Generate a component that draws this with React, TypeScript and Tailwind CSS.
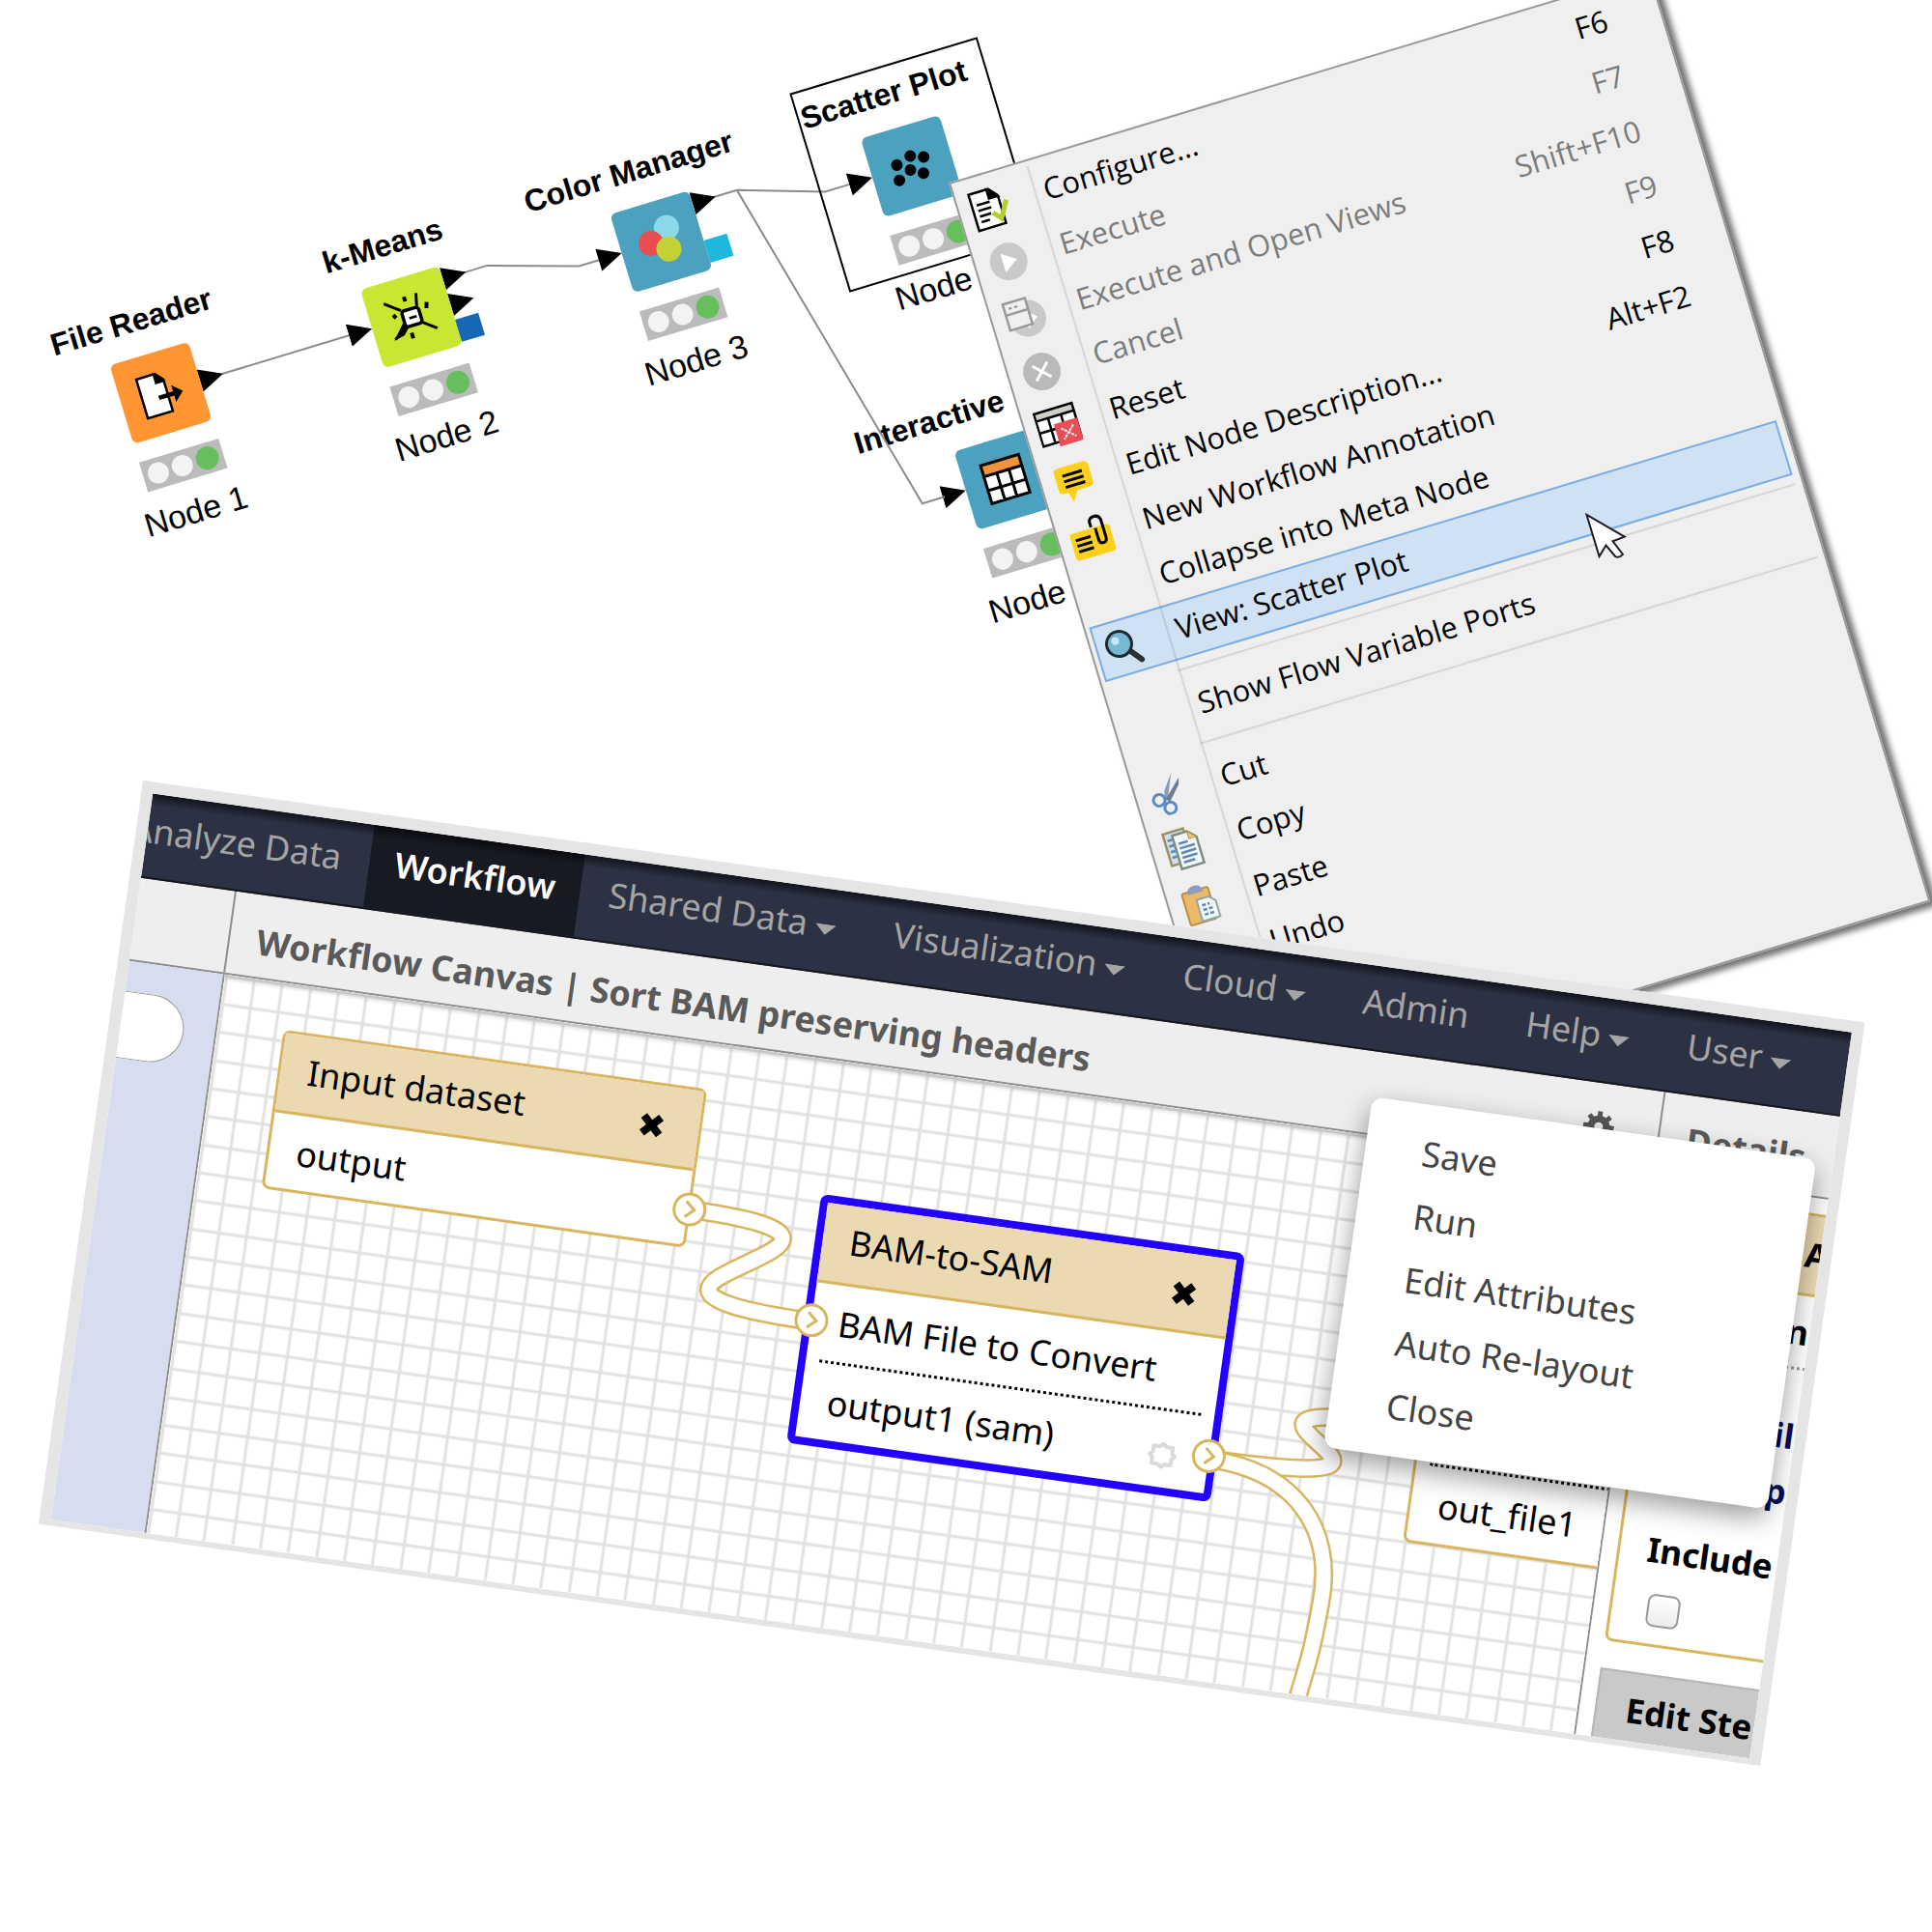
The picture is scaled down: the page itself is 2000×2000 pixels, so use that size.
import React from "react";

type Port = { side: "in" | "out"; at: string; kind?: string };

function StatusLights() {
  return (
    <div className="flex h-8 w-[86px] items-center justify-center gap-1 bg-[#bbbbbb]">
      <span className="h-[22px] w-[22px] rounded-full bg-[#f3f3f3]" />
      <span className="h-[22px] w-[22px] rounded-full bg-[#f3f3f3]" />
      <span className="h-6 w-6 rounded-full bg-[#66bf5c]" />
    </div>
  );
}

function FileReaderIcon() {
  return (
    <svg viewBox="0 0 85 85" className="h-full w-full">
      <path d="M22 22h20l7 8v34H22z" fill="#fff" stroke="#000" strokeWidth="2.5" />
      <path d="M40 21v11h10z" fill="#000" stroke="#000" strokeWidth="1" />
      <path d="M39 47h18" stroke="#000" strokeWidth="4.5" />
      <path d="M55 38l10 9-10 9z" fill="#000" />
    </svg>
  );
}

function ClusterIcon() {
  return (
    <svg viewBox="0 0 85 85" className="h-full w-full">
      <g stroke="#000" strokeWidth="3" fill="none">
        <path d="M19 21l15 12M54 20l-3 13M65 61L52 51M20 60l13-8" />
        <path d="M20 60l10-2 8-8-6-3z" fill="#000" strokeWidth="1" />
        <path d="M41 20v5M62 32l-2 6M25 35l2 4M38 58v6" strokeWidth="4" />
        <rect x="34" y="34" width="18" height="17" rx="3" fill="#fff" strokeWidth="3.5" />
        <path d="M40 43h8" strokeWidth="2.5" />
      </g>
    </svg>
  );
}

function PaletteIcon() {
  return (
    <svg viewBox="0 0 85 85" className="h-full w-full">
      <circle cx="52" cy="30" r="13" fill="#8bd8e8" />
      <circle cx="32" cy="41" r="13" fill="#e84e4f" />
      <circle cx="48" cy="52" r="13" fill="#c3d037" />
    </svg>
  );
}

function DotsIcon() {
  return (
    <svg viewBox="0 0 85 85" className="h-full w-full">
      <circle cx="28" cy="37" r="6" />
      <circle cx="44" cy="32" r="6" />
      <circle cx="57" cy="37" r="6" />
      <circle cx="40" cy="46" r="6" />
      <circle cx="52" cy="53" r="6" />
      <circle cx="26" cy="53" r="6" />
    </svg>
  );
}

function TableNodeIcon() {
  return (
    <svg viewBox="0 0 85 85" className="h-full w-full">
      <rect x="22" y="22" width="41" height="41" fill="#fff" />
      <rect x="22" y="22" width="41" height="12" fill="#ef923c" />
      <path d="M22 22h41v41H22zM22 34h41M22 49h41M36 34v29M49 34v29" fill="none" stroke="#000" strokeWidth="3" />
    </svg>
  );
}

const nodes: {
  title: string;
  label: string;
  pos: string;
  titlePos: string;
  color: string;
  Icon: () => React.ReactElement;
  ports: Port[];
}[] = [
  {
    title: "File Reader",
    label: "Node 1",
    pos: "left-[115px] top-[12px]",
    titlePos: "-left-[52px]",
    color: "bg-[#ff9632]",
    Icon: FileReaderIcon,
    ports: [{ side: "out", at: "top-[30px]" }],
  },
  {
    title: "k-Means",
    label: "Node 2",
    pos: "left-[386px] top-[12px]",
    titlePos: "-left-[29px]",
    color: "bg-[#c8e632]",
    Icon: ClusterIcon,
    ports: [
      { side: "in", at: "top-[30px]" },
      { side: "out", at: "top-[2px]" },
      { side: "out", at: "top-[30px]" },
      { side: "out", at: "top-[58px]", kind: "bg-[#1668b2]" },
    ],
  },
  {
    title: "Color Manager",
    label: "Node 3",
    pos: "left-[656px] top-[12px]",
    titlePos: "-left-[81px]",
    color: "bg-[#4ca1bf]",
    Icon: PaletteIcon,
    ports: [
      { side: "in", at: "top-[30px]" },
      { side: "out", at: "top-[2px]" },
      { side: "out", at: "top-[54px]", kind: "bg-[#1fb7dd]" },
    ],
  },
  {
    title: "Scatter Plot",
    label: "Node",
    pos: "left-[927px] top-[12px]",
    titlePos: "-left-[53px]",
    color: "bg-[#4ca1bf]",
    Icon: DotsIcon,
    ports: [{ side: "in", at: "top-[30px]" }],
  },
  {
    title: "Interactive",
    label: "Node",
    pos: "left-[926px] top-[350px]",
    titlePos: "-left-[96px]",
    color: "bg-[#4ca1bf]",
    Icon: TableNodeIcon,
    ports: [{ side: "in", at: "top-[30px]" }],
  },
];

function PipelineNode({ node }: { node: (typeof nodes)[number] }) {
  const { Icon } = node;
  return (
    <div className={`absolute h-[85px] w-[85px] ${node.pos}`}>
      <h3
        className={`absolute bottom-[106px] whitespace-nowrap text-[32px] font-bold leading-8 ${node.titlePos}`}
      >
        {node.title}
      </h3>
      <div className={`h-full w-full rounded-md ${node.color}`}>
        <Icon />
      </div>
      {node.ports.map((p, i) => {
        const side = p.side === "in" ? "-left-[25px]" : "-right-[25px]";
        return p.kind ? (
          <span key={i} className={`absolute h-6 w-[25px] ${side} ${p.at} ${p.kind}`} />
        ) : (
          <svg key={i} viewBox="0 0 25 24" className={`absolute h-6 w-[25px] ${side} ${p.at}`}>
            <path d="M0 0l25 12L0 24z" />
          </svg>
        );
      })}
      <div className="absolute left-0 top-[105px]">
        <StatusLights />
      </div>
      <p className="absolute -left-[13px] top-[150px] whitespace-nowrap text-[34px] leading-10">
        {node.label}
      </p>
    </div>
  );
}

function ConfigureIcon() {
  return (
    <svg viewBox="0 0 44 44" className="h-11 w-11">
      <path d="M2 3h21l8 9v30H2z" fill="#fff" stroke="#000" strokeWidth="2.5" />
      <path d="M21 3v10h10z" stroke="#000" strokeWidth="2" />
      <path d="M7 16h14M7 22h14M7 28h12M7 34h9" stroke="#000" strokeWidth="2.5" />
      <path d="M21 28l7 8 10-17" fill="none" stroke="#b4cf2a" strokeWidth="5" />
    </svg>
  );
}

function PlayIcon() {
  return (
    <svg viewBox="0 0 44 44" className="h-11 w-11">
      <circle cx="22" cy="22" r="19.5" fill="#c9c9c9" />
      <path d="M16 12l15 10-15 10z" fill="#fff" />
    </svg>
  );
}

function PlayWindowIcon() {
  return (
    <svg viewBox="0 0 44 44" className="h-11 w-11">
      <circle cx="24" cy="24" r="19" fill="#c9c9c9" />
      <path d="M22 14l12 11-12 10z" fill="#fff" />
      <rect x="3" y="3" width="24" height="28" fill="#efefef" stroke="#999" strokeWidth="2.5" />
      <path d="M3 15h24" stroke="#999" strokeWidth="2.5" />
      <path d="M8 9h3M14 9h3" stroke="#888" strokeWidth="2" />
    </svg>
  );
}

function CancelIcon() {
  return (
    <svg viewBox="0 0 44 44" className="h-11 w-11">
      <circle cx="22" cy="22" r="19.5" fill="#b9b9b9" />
      <path d="M14 14l16 16M30 14L14 30" stroke="#fff" strokeWidth="3" />
    </svg>
  );
}

function ResetIcon() {
  return (
    <svg viewBox="0 0 44 44" className="h-11 w-11">
      <rect x="1" y="3" width="41" height="35" fill="#fff" />
      <rect x="1" y="3" width="41" height="8" fill="#cfcfc8" />
      <path d="M1 3h41v35H1zM1 11h41M1 24h41M14 11v27M28 11v27" fill="none" stroke="#000" strokeWidth="2.5" />
      <rect x="18" y="19" width="25" height="24" fill="#e84e55" />
      <path d="M24 25l13 12M37 25L24 37" stroke="#fff" strokeWidth="2" strokeDasharray="3 1" />
    </svg>
  );
}

function NoteIcon() {
  return (
    <svg viewBox="0 0 44 44" className="h-11 w-11">
      <path d="M8 4h27q5 0 5 5v17q0 5-5 5H22l-7 11-3-11H8q-5 0-5-5V9q0-5 5-5z" fill="#fdd01c" />
      <path d="M11 13h21M11 19h21M11 25h21" stroke="#000" strokeWidth="3" />
    </svg>
  );
}

function ClipNoteIcon() {
  return (
    <svg viewBox="0 0 44 44" className="h-11 w-11">
      <rect x="0" y="14" width="43" height="29" rx="4" fill="#fdd01c" />
      <path d="M5 22h16M5 28h16M5 34h16" stroke="#000" strokeWidth="3" />
      <path d="M24 13V7q1-4 6-4t6 5v19q0 5-4 5t-4-5V15" fill="none" stroke="#000" strokeWidth="3" />
    </svg>
  );
}

function MagnifierIcon() {
  return (
    <svg viewBox="0 0 44 44" className="h-11 w-11">
      <path d="M25 27l10 13" stroke="#2c2f33" strokeWidth="6" strokeLinecap="round" />
      <circle cx="17" cy="18" r="13" fill="#76b9d3" stroke="#1f2a30" strokeWidth="3" />
      <circle cx="14" cy="14" r="4" fill="#c6e6f2" />
    </svg>
  );
}

function ScissorsIcon() {
  return (
    <svg viewBox="0 0 44 44" className="h-11 w-11">
      <path d="M30 2L19 27l-4 3 3-12z" fill="#8a9bb5" />
      <path d="M36 9L17 27l3 4 14-15z" fill="#6b7c99" />
      <circle cx="10" cy="26" r="6" fill="none" stroke="#5d8cc0" strokeWidth="3" />
      <circle cx="19" cy="37" r="6" fill="none" stroke="#5d8cc0" strokeWidth="3" />
    </svg>
  );
}

function CopyIcon() {
  return (
    <svg viewBox="0 0 44 44" className="h-11 w-11">
      <path d="M3 2h22v34H3z" fill="#cfe0ec" stroke="#9b915f" strokeWidth="2.5" />
      <path d="M6 10h5M6 16h5M6 22h5M6 28h5" stroke="#5f86b5" strokeWidth="2.5" />
      <path d="M12 6h16l8 8v28H12z" fill="#f4fafd" stroke="#7d8f7d" strokeWidth="2.5" />
      <path d="M28 6l8 8h-8z" fill="#ecc56b" stroke="#b1924a" strokeWidth="1" />
      <path d="M16 16h10M16 21h16M16 26h16M16 31h16M16 36h12" stroke="#5f86b5" strokeWidth="2.5" />
    </svg>
  );
}

function PasteIcon() {
  return (
    <svg viewBox="0 0 44 44" className="h-11 w-11">
      <rect x="4" y="7" width="28" height="34" rx="2" fill="#ecb968" stroke="#b98e46" strokeWidth="2" />
      <path d="M10 10q0-8 8-8t8 8z" fill="#8f9bb8" />
      <path d="M17 17h13l6 6v17H17z" fill="#f1f8fb" stroke="#8fa7a6" strokeWidth="2" />
      <path d="M21 24h8M21 29h11M21 34h11" stroke="#5f86b5" strokeWidth="2.5" strokeDasharray="4 2" />
    </svg>
  );
}

type Item = { text: string; keys?: string; off?: boolean; active?: boolean; Icon?: () => React.ReactElement };

const runItems: Item[] = [
  { text: "Configure...", keys: "F6", Icon: ConfigureIcon },
  { text: "Execute", keys: "F7", off: true, Icon: PlayIcon },
  { text: "Execute and Open Views", keys: "Shift+F10", off: true, Icon: PlayWindowIcon },
  { text: "Cancel", keys: "F9", off: true, Icon: CancelIcon },
  { text: "Reset", keys: "F8", Icon: ResetIcon },
  { text: "Edit Node Description...", keys: "Alt+F2", Icon: NoteIcon },
  { text: "New Workflow Annotation", Icon: ClipNoteIcon },
  { text: "Collapse into Meta Node" },
  { text: "View: Scatter Plot", active: true, Icon: MagnifierIcon },
];

const editItems: Item[] = [
  { text: "Cut", Icon: ScissorsIcon },
  { text: "Copy", Icon: CopyIcon },
  { text: "Paste", Icon: PasteIcon },
  { text: "Undo" },
];

function MenuRow({ item }: { item: Item }) {
  const tone = item.off ? "text-[#7c7c7c]" : "text-black";
  const frame = item.active ? "border-[#78aee5] bg-[#cfe1f2]" : "border-transparent";
  return (
    <button
      type="button"
      disabled={item.off}
      className={`flex w-full items-center border-2 pl-1.5 pr-[46px] text-left text-[31px] leading-9 ${tone} ${frame}`}
    >
      <span className="h-11 w-11 shrink-0">{item.Icon && <item.Icon />}</span>
      <span className="flex-1 whitespace-nowrap pb-1 pl-[34px]">{item.text}</span>
      {item.keys && <kbd className="pb-1 font-['Open_Sans',sans-serif]">{item.keys}</kbd>}
    </button>
  );
}

function MenuDivider() {
  return (
    <div className="flex h-5 items-center pl-[75px]">
      <hr className="w-full border-0 border-t-2 border-[#d6d6d6]" />
    </div>
  );
}

function ContextMenu() {
  return (
    <div className="absolute left-[1001px] top-[82px] w-[758px] border-2 border-[#9a9a9a] bg-[#efefef] pb-[125px] pl-1 pr-[7px] pt-[5px] font-['Open_Sans',sans-serif] shadow-[6px_6px_6px_rgba(0,0,0,0.55)]">
      <div className="grid h-[535px] auto-rows-fr">
        {runItems.map((i) => (
          <MenuRow key={i.text} item={i} />
        ))}
      </div>
      <MenuDivider />
      <div className="grid h-[59px]">
        <MenuRow item={{ text: "Show Flow Variable Ports" }} />
      </div>
      <MenuDivider />
      <div className="grid h-[238px] auto-rows-fr">
        {editItems.map((i) => (
          <MenuRow key={i.text} item={i} />
        ))}
      </div>
      <span className="absolute bottom-0 left-20 top-[5px] w-0.5 bg-black/10" />
      <svg viewBox="-2 -2 36 56" className="absolute left-[529px] top-[516px] h-14 w-9">
        <path d="M0 0v45l10-9 6 14q3 3 8 0l-6-16 13-1z" fill="#fff" stroke="#1c1c28" strokeWidth="2" />
      </svg>
    </div>
  );
}

function Pipeline() {
  return (
    <section
      aria-label="Node pipeline"
      className="absolute left-0 top-[400px] h-0 w-full origin-top-left rotate-[-16.8deg] font-['Liberation_Sans',sans-serif] text-black"
    >
      <svg viewBox="0 0 1000 600" className="absolute left-0 top-0 h-[600px] w-[1000px] overflow-visible">
        <g fill="none" stroke="#8c8c8c" strokeWidth="2">
          <path d="M224 54H362" />
          <path d="M494 26h25l91 28h24" />
          <path d="M764 26h25l87 28h28" />
        </g>
      </svg>
      <div className="absolute left-[870px] top-[-54px] h-[215px] w-[203px] border-2 border-black" />
      {nodes.map((n) => (
        <PipelineNode key={n.pos} node={n} />
      ))}
      <svg viewBox="0 0 1000 600" className="absolute left-0 top-0 h-[600px] w-[1000px] overflow-visible">
        <path d="M789 26l90 366h24" fill="none" stroke="#8c8c8c" strokeWidth="2" />
      </svg>
      <ContextMenu />
    </section>
  );
}

function Caret() {
  return (
    <svg viewBox="0 0 22 11" className="mt-2 h-[11px] w-[22px]">
      <path d="M0 0h22L11 11z" fill="#a5a5a5" />
    </svg>
  );
}

const tabs: { text: string; caret?: boolean; active?: boolean }[] = [
  { text: "Analyze Data" },
  { text: "Workflow", active: true },
  { text: "Shared Data", caret: true },
  { text: "Visualization", caret: true },
  { text: "Cloud", caret: true },
  { text: "Admin" },
  { text: "Help", caret: true },
  { text: "User", caret: true },
];

function TopBar() {
  return (
    <nav className="relative flex h-[88px] overflow-hidden border-b-2 border-[#15171f] bg-[#2c3143] text-4xl">
      <div className="-ml-[47px] flex shrink-0">
        {tabs.map((t) => (
          <a
            key={t.text}
            href="#"
            className={`flex items-center gap-2 whitespace-nowrap pb-2.5 ${
              t.active ? "bg-[#181a22] px-[26px] font-semibold text-white" : "px-[30px] text-[#a5a5a5]"
            }`}
          >
            {t.text}
            {t.caret && <Caret />}
          </a>
        ))}
      </div>
      <span className="pointer-events-none absolute inset-x-0 top-0 h-3 bg-linear-to-b from-black/60 to-transparent" />
    </nav>
  );
}

function Terminal({ side }: { side: string }) {
  return (
    <svg viewBox="0 0 36 36" className={`absolute top-[22px] z-10 h-9 w-9 ${side}`}>
      <circle cx="18" cy="18" r="16" fill="#fff" stroke="#d9b560" strokeWidth="3" />
      <path d="M14 10l9 8-9 8" fill="none" stroke="#d9b560" strokeWidth="3" />
    </svg>
  );
}

function CloseButton() {
  return (
    <button type="button" aria-label="Close" className="h-[26px] w-[26px]">
      <svg viewBox="0 0 26 26" className="h-full w-full">
        <path d="M4 4l18 18M22 4L4 22" stroke="#000" strokeWidth="8" />
      </svg>
    </button>
  );
}

function StepCard({
  title,
  place,
  frame,
  children,
}: {
  title?: string;
  place: string;
  frame: string;
  children: React.ReactNode;
}) {
  return (
    <article className={`absolute w-[443px] rounded-lg bg-white text-4xl leading-none text-black ${place} ${frame}`}>
      <header className="flex h-[83px] items-center justify-between border-b-[3px] border-[#d9b560] bg-[#ebd9b1] pb-1 pl-7 pr-9">
        {title && (
          <>
            <h3>{title}</h3>
            <span className="pt-2">
              <CloseButton />
            </span>
          </>
        )}
      </header>
      {children}
    </article>
  );
}

function Canvas() {
  return (
    <main className="relative h-[584px] flex-1 overflow-hidden bg-white">
      <svg className="absolute inset-0 h-full w-full">
        <defs>
          <pattern id="grid" x="29" y="29" width="88" height="88" patternUnits="userSpaceOnUse">
            <path
              d="M2 0v88M31 0v88M61 0v88M0 2h88M0 31h88M0 61h88"
              fill="none"
              stroke="#e1e1e1"
              strokeWidth="3"
            />
          </pattern>
        </defs>
        <rect width="100%" height="100%" fill="url(#grid)" />
        <g transform="translate(-112 -188)" fill="none">
          {[
            "M1191 543C1506 543 1094 478 1409 478",
            "M621 362C906 362 463 459 763 459",
            "M1191 543C1285 543 1328 600 1326 670S1318 750 1314 790",
          ].map((d) => (
            <g key={d}>
              <path d={d} stroke="#d9b560" strokeWidth="20" />
              <path d={d} stroke="#fff" strokeWidth="15" />
            </g>
          ))}
        </g>
      </svg>
      <StepCard
        title="Input dataset"
        place="left-[68px] top-[48px]"
        frame="border-[3px] border-[#d9b560]"
      >
        <div className="relative flex h-[77px] items-center pl-7">
          output
          <Terminal side="-right-[20px]" />
        </div>
      </StepCard>
      <StepCard title="BAM-to-SAM" place="left-[643px] top-[139px]" frame="border-8 border-[#2400ff]">
        <div className="relative flex h-[79px] items-center pl-7">
          <Terminal side="-left-[18px]" />
          BAM File to Convert
        </div>
        <div className="mx-[14px] border-t-[3px] border-dotted border-black" />
        <div className="relative flex h-[79px] items-center justify-between pl-7 pr-8">
          output1 (sam)
          <svg viewBox="0 0 32 32" className="mt-3 h-8 w-8">
            <path
              d="M16 4l4 3h6v6l3 3-3 3v6h-6l-4 3-4-3H6v-6l-3-3 3-3V7h6z"
              fill="none"
              stroke="#dadada"
              strokeWidth="4"
              strokeLinejoin="round"
            />
          </svg>
          <Terminal side="-right-[18px]" />
        </div>
      </StepCard>
      <StepCard place="left-[1289px] top-[162px]" frame="border-[3px] border-[#d9b560]">
        <div className="h-[79px]" />
        <div className="mx-[14px] border-t-[3px] border-dotted border-black" />
        <div className="flex h-[79px] items-center pl-7">out_file1</div>
      </StepCard>
      <span className="pointer-events-none absolute inset-x-0 top-0 h-2 bg-linear-to-b from-black/15 to-transparent" />
    </main>
  );
}

function DetailsPane() {
  return (
    <aside className="h-[584px] w-[184px] overflow-hidden border-l-2 border-[#8d8d8d] bg-white pl-4 pt-4 text-[35px] font-bold leading-none text-black">
      <div className="-mr-10 rounded-lg border-[3px] border-[#d9b560] pb-[18px]">
        <div className="h-[83px] border-b-[3px] border-[#d9b560] bg-[#ebd9b1] pl-[147px] pt-[22px]">A</div>
        <div className="flex h-[74px] items-center justify-end pr-[38px]">n</div>
        <div className="mx-4 border-t-[3px] border-dotted border-[#999]" />
        <p className="mt-10 pr-[38px] text-right leading-[58px] text-[#0a0a50]">il</p>
        <p className="pr-[38px] text-right leading-[58px] text-[#0a0a50]">p</p>
        <label className="mt-5 block pl-7 leading-[58px]">
          Include
          <input
            type="checkbox"
            className="ml-2 mt-4 block h-[34px] w-[34px] appearance-none rounded-lg border-2 border-[#999] bg-linear-to-b from-white to-[#ececec]"
          />
        </label>
      </div>
      <div className="-mr-10 mt-7 h-[82px] whitespace-nowrap border-2 border-[#b5b5b5] bg-[#c9c9c9] pl-[30px] pt-5">
        Edit Ste
      </div>
    </aside>
  );
}

function OptionsPopup() {
  return (
    <ul className="absolute right-[18px] top-[135px] w-[464px] rounded-xl bg-white pb-[18px] pl-[59px] pt-[18px] text-4xl text-[#444] shadow-[0_10px_28px_rgba(0,0,0,0.4)]">
      {["Save", "Run", "Edit Attributes", "Auto Re-layout", "Close"].map((t) => (
        <li key={t}>
          <button type="button" className="block h-[66px] w-full text-left">
            {t}
          </button>
        </li>
      ))}
    </ul>
  );
}

function WorkflowEditor() {
  return (
    <section
      aria-label="Workflow editor"
      className="absolute left-[148px] top-[808px] w-[90%] origin-top-left rotate-[8deg] border-x-12 border-b-[6px] border-t-12 border-[#e5e5e5] bg-white font-['Noto_Sans',sans-serif]"
    >
      <div className="relative overflow-hidden">
        <TopBar />
        <div className="flex h-[87px] border-b-2 border-[#8d8d8d] bg-[#eeeeee] text-4xl font-bold text-[#5a5a5a]">
          <div className="w-[98px] shrink-0" />
          <h2 className="flex flex-1 items-center justify-between whitespace-nowrap border-l-2 border-[#8d8d8d] pl-7 pr-[46px] pt-3">
            Workflow Canvas | Sort BAM preserving headers
            <svg viewBox="0 0 32 32" className="mb-2 h-8 w-8">
              <circle cx="16" cy="16" r="8" fill="none" stroke="#555" strokeWidth="7" />
              <path
                d="M16 0v8M16 24v8M0 16h8M24 16h8M5 5l6 6M21 21l6 6M27 5l-6 6M11 21l-6 6"
                stroke="#555"
                strokeWidth="5"
              />
            </svg>
          </h2>
          <h2 className="flex w-[184px] shrink-0 items-center border-l-2 border-[#8d8d8d] pl-7 pt-2">Details</h2>
        </div>
        <div className="flex">
          <aside className="w-[98px] shrink-0 bg-[#d7dcee] pt-[31px]">
            <input
              type="text"
              aria-label="Search tools"
              className="block h-[70px] w-[66px] rounded-r-full border border-l-0 border-[#999] bg-white"
            />
          </aside>
          <div className="w-0.5 bg-[#8d8d8d]" />
          <Canvas />
          <DetailsPane />
        </div>
        <OptionsPopup />
      </div>
    </section>
  );
}

export default function App() {
  return (
    <div className="relative min-h-screen overflow-hidden bg-white">
      <Pipeline />
      <WorkflowEditor />
    </div>
  );
}
